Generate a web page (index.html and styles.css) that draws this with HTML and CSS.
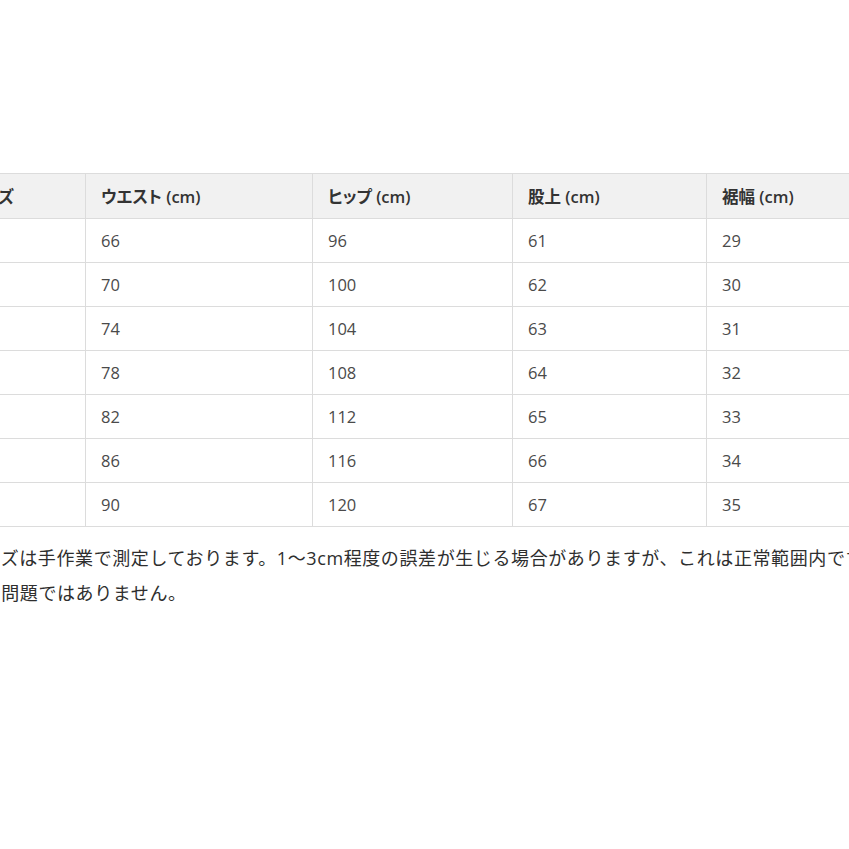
FILE: index.html
```html
<!DOCTYPE html>
<html lang="ja">
<head>
<meta charset="utf-8">
<link rel="stylesheet" href="styles.css">
</head>
<body>
<div class="page">
  <table class="size-table">
    <colgroup>
      <col class="c1"><col class="c2"><col class="c3"><col class="c4"><col class="c5">
    </colgroup>
    <thead>
      <tr><th>サイズ</th><th>ウエスト (cm)</th><th>ヒップ (cm)</th><th>股上 (cm)</th><th>裾幅 (cm)</th></tr>
    </thead>
    <tbody>
      <tr><td>S</td><td>66</td><td>96</td><td>61</td><td>29</td></tr>
      <tr><td>M</td><td>70</td><td>100</td><td>62</td><td>30</td></tr>
      <tr><td>L</td><td>74</td><td>104</td><td>63</td><td>31</td></tr>
      <tr><td>XL</td><td>78</td><td>108</td><td>64</td><td>32</td></tr>
      <tr><td>2XL</td><td>82</td><td>112</td><td>65</td><td>33</td></tr>
      <tr><td>3XL</td><td>86</td><td>116</td><td>66</td><td>34</td></tr>
      <tr><td>4XL</td><td>90</td><td>120</td><td>67</td><td>35</td></tr>
    </tbody>
  </table>
  <p class="note">サイズは手作業で測定しております。1〜3cm程度の誤差が生じる場合がありますが、これは正常範囲内です<br>ので問題ではありません。</p>
</div>
</body>
</html>
```
FILE: styles.css
```css
html, body {
  margin: 0;
  padding: 0;
  background: #ffffff;
  overflow: hidden;
}
.page {
  width: 1000px;
  margin-left: -48px;
  padding-top: 173px;
  font-family: "Open Sans", "Noto Sans CJK JP", sans-serif;
}
.size-table {
  border-collapse: collapse;
  table-layout: fixed;
  width: 954px;
  font-size: 16.5px;
  font-feature-settings: "palt";
}
.c1 { width: 133px; }
.c2 { width: 227px; }
.c3 { width: 200px; }
.c4 { width: 194px; }
.c5 { width: 200px; }
.size-table th,
.size-table td {
  border: 1px solid #dcdcdc;
  text-align: left;
  padding: 0 15px;
  white-space: nowrap;
}
.size-table th {
  height: 44px;
  background: #f1f1f1;
  color: #333333;
  font-weight: 600;
}
.size-table td {
  height: 43px;
  color: #4a4a4a;
  font-weight: 400;
}
.note {
  margin: 14px 0 0 12px;
  font-size: 18px;
  letter-spacing: 0.6px;
  line-height: 35px;
  color: #2e2e2e;
  white-space: nowrap;
}
```
